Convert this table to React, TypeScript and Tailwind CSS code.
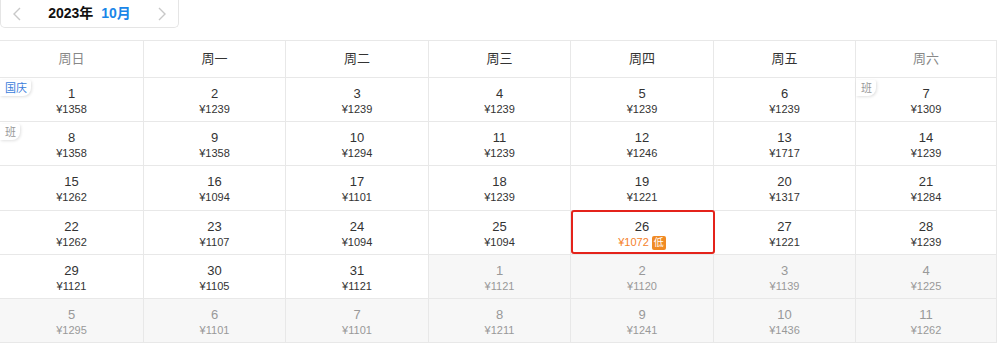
import React from 'react';

interface Day {
  day: number;
  price: number;
  muted?: boolean;
  tag?: { text: string; kind: 'holiday' | 'work' };
  lowest?: boolean;
}

const weekdays = ['周日', '周一', '周二', '周三', '周四', '周五', '周六'];

const rows: Day[][] = [
  [
    { day: 1, price: 1358, tag: { text: '国庆', kind: 'holiday' } },
    { day: 2, price: 1239 },
    { day: 3, price: 1239 },
    { day: 4, price: 1239 },
    { day: 5, price: 1239 },
    { day: 6, price: 1239 },
    { day: 7, price: 1309, tag: { text: '班', kind: 'work' } },
  ],
  [
    { day: 8, price: 1358, tag: { text: '班', kind: 'work' } },
    { day: 9, price: 1358 },
    { day: 10, price: 1294 },
    { day: 11, price: 1239 },
    { day: 12, price: 1246 },
    { day: 13, price: 1717 },
    { day: 14, price: 1239 },
  ],
  [
    { day: 15, price: 1262 },
    { day: 16, price: 1094 },
    { day: 17, price: 1101 },
    { day: 18, price: 1239 },
    { day: 19, price: 1221 },
    { day: 20, price: 1317 },
    { day: 21, price: 1284 },
  ],
  [
    { day: 22, price: 1262 },
    { day: 23, price: 1107 },
    { day: 24, price: 1094 },
    { day: 25, price: 1094 },
    { day: 26, price: 1072, lowest: true },
    { day: 27, price: 1221 },
    { day: 28, price: 1239 },
  ],
  [
    { day: 29, price: 1121 },
    { day: 30, price: 1105 },
    { day: 31, price: 1121 },
    { day: 1, price: 1121, muted: true },
    { day: 2, price: 1120, muted: true },
    { day: 3, price: 1139, muted: true },
    { day: 4, price: 1225, muted: true },
  ],
  [
    { day: 5, price: 1295, muted: true },
    { day: 6, price: 1101, muted: true },
    { day: 7, price: 1101, muted: true },
    { day: 8, price: 1211, muted: true },
    { day: 9, price: 1241, muted: true },
    { day: 10, price: 1436, muted: true },
    { day: 11, price: 1262, muted: true },
  ],
];

const DayCell: React.FC<{ d: Day; tall: boolean }> = ({ d, tall }) => (
  <div
    className={`relative ${tall ? 'h-[45px]' : 'h-[44px]'} border-b border-r border-[#e8e8e8] ${
      d.muted ? 'bg-[#f7f7f7]' : 'bg-white'
    }`}
  >
    {d.tag && (
      <span
        className={`absolute left-0 top-[2px] pl-[5px] pr-[4px] h-[16px] leading-[16px] text-[11px] bg-white rounded-br-[8px] rounded-tr-[2px] shadow-[1px_1px_3px_rgba(0,0,0,0.12)] ${
          d.tag.kind === 'holiday' ? 'text-[#3b7ddb]' : 'text-[#999]'
        }`}
      >
        {d.tag.text}
      </span>
    )}
    {d.lowest && (
      <div className="absolute z-10 left-0 -top-[1px] w-[144px] h-[44px] border-2 border-[#e4231b] rounded-[3px]" />
    )}
    <div className="flex flex-col items-center pt-[8px]">
      <span className={`text-[13px] leading-[16px] ${d.muted ? 'text-[#999]' : 'text-[#333]'}`}>{d.day}</span>
      <span
        className={`flex items-center gap-[3px] text-[11px] leading-[15px] ${
          d.lowest ? 'text-[#f5822a]' : d.muted ? 'text-[#999]' : 'text-[#333]'
        }`}
      >
        ¥{d.price}
        {d.lowest && (
          <span className="inline-flex items-center justify-center w-[14px] h-[14px] rounded-[2px] bg-[#f08a24] text-white text-[10px] leading-none">
            低
          </span>
        )}
      </span>
    </div>
  </div>
);

export default function App() {
  return (
    <div className="w-[999px] h-[343px] bg-white font-['Liberation_Sans','Noto_Sans_CJK_SC',sans-serif] overflow-hidden">
      <div className="w-[179px] h-[28px] flex items-center justify-between px-[12px] border border-t-0 border-[#e5e5e5] rounded-b-[5px]">
        <svg width="8" height="14" viewBox="0 0 8 14" fill="none" stroke="#c8c8c8" strokeWidth="1.4">
          <path d="M7 1 1 7l6 6" />
        </svg>
        <div className="flex items-center gap-[8px] text-[14px] font-bold">
          <span className="text-[#111]">2023年</span>
          <span className="text-[#1a86e8]">10月</span>
        </div>
        <svg width="8" height="14" viewBox="0 0 8 14" fill="none" stroke="#c8c8c8" strokeWidth="1.4">
          <path d="m1 1 6 6-6 6" />
        </svg>
      </div>

      <div className="mt-[12px] w-[997px] border-t border-[#e8e8e8] grid grid-cols-[144px_142px_143px_142px_143px_142px_141px]">
        {weekdays.map((w, i) => (
          <div
            key={w}
            className={`h-[37px] flex items-center justify-center text-[13px] border-b border-r border-[#e8e8e8] ${
              i === 0 || i === 6 ? 'text-[#888]' : 'text-[#333]'
            }`}
          >
            {w}
          </div>
        ))}
        {rows.map((row, ri) =>
          row.map((d, ci) => <DayCell key={`${ri}-${ci}`} d={d} tall={ri === 2} />)
        )}
      </div>
    </div>
  );
}
